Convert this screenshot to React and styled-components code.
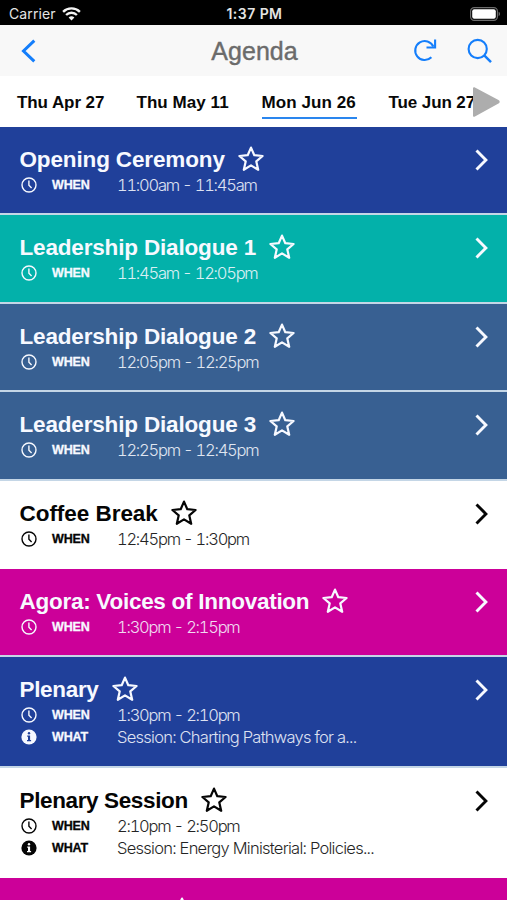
import React from 'react';
import styled, { createGlobalStyle } from 'styled-components';

const GlobalStyle = createGlobalStyle`
  * {
    box-sizing: border-box;
  }
  body {
    margin: 0;
    background: #ffffff;
    font-family: 'Liberation Sans', Arial, sans-serif;
  }
`;

const Screen = styled.div`
  width: 507px;
  height: 900px;
  overflow: hidden;
  display: flex;
  flex-direction: column;
`;

const StatusBar = styled.div`
  flex: none;
  display: grid;
  grid-template-columns: 1fr auto 1fr;
  align-items: center;
  height: 25px;
  padding: 2px 6px 0 9px;
  background: #000000;
  color: #e4e4e4;
  font-family: Inter, sans-serif;
  font-size: 14px;
`;

const Carrier = styled.div`
  display: flex;
  align-items: center;
  gap: 6px;
  letter-spacing: 0.1px;
`;

const Time = styled.div`
  padding-right: 1px;
  font-weight: 600;
  font-size: 14px;
  letter-spacing: 0.45px;
`;

const Battery = styled.svg`
  display: block;
  justify-self: end;
`;

const NavBar = styled.header`
  flex: none;
  display: grid;
  grid-template-columns: 1fr auto 1fr;
  align-items: center;
  height: 51px;
  padding: 1px 14px 0 18px;
  background: #f8f8f8;
  color: #147efb;
`;

const NavTitle = styled.h1`
  margin: 0;
  padding: 1px 2px 0 0;
  color: #6b6b6b;
  font-size: 25px;
  font-weight: 400;
  letter-spacing: 0.05px;
  -webkit-text-stroke: 0.4px #6b6b6b;
`;

const NavActions = styled.div`
  display: flex;
  justify-content: flex-end;
  gap: 30px;
`;

const Tabs = styled.nav`
  flex: none;
  display: flex;
  align-items: center;
  gap: 32px;
  height: 51px;
  padding-left: 17px;
  position: relative;
  background: #ffffff;
`;

const Tab = styled.div`
  flex: none;
  height: 34px;
  padding-top: 8px;
  line-height: 20px;
  color: #080808;
  font-size: 17px;
  font-weight: 700;
  letter-spacing: ${({ $track }) => $track}px;
  width: ${({ $width }) => $width}px;
  white-space: nowrap;
  border-bottom: 2px solid ${({ $active }) => ($active ? '#2a86ee' : 'transparent')};
`;

const ScrollArrow = styled.svg`
  position: absolute;
  right: 7px;
  top: 10px;
`;

const Row = styled.article`
  flex: none;
  display: flex;
  justify-content: space-between;
  height: ${({ $tall }) => ($tall ? 110.4 : 88.4)}px;
  padding: 19px 18px 0 20px;
  border-bottom: 2px solid #c4d6e6;
  background: ${({ $bg }) => $bg};
  color: ${({ $dark }) => ($dark ? '#050505' : '#f7f9ff')};

  ${({ $plainEdge }) => $plainEdge && 'border-bottom-color: transparent;'}
`;

const PeekRow = styled(Row)`
  justify-content: flex-start;
  padding-left: 169px;
`;

const Title = styled.h2`
  display: flex;
  align-items: center;
  gap: 13px;
  height: 26px;
  margin: 0 0 0 -0.5px;
  font-size: 22.5px;
  font-weight: 700;
  white-space: nowrap;
  letter-spacing: ${({ $track }) => $track}px;
`;

const TitleText = styled.span`
  padding-top: 2px;
`;

const Detail = styled.div`
  display: grid;
  grid-template-columns: 31px 65px auto;
  align-items: center;
  height: 22px;
  margin-top: ${({ $first }) => ($first ? 2 : 0)}px;
  padding-left: 1px;
`;

const Label = styled.span`
  font-size: 12.5px;
  font-weight: 700;
  letter-spacing: -0.15px;
  -webkit-text-stroke: 0.3px currentColor;
`;

const Value = styled.span`
  font-family: Inter, 'Liberation Sans', sans-serif;
  font-size: 16.5px;
  font-weight: 300;
  font-variant-numeric: tabular-nums;
  white-space: nowrap;
  letter-spacing: ${({ $track }) => $track}px;
  opacity: 0.88;
`;

const Glyph = styled.svg`
  flex: none;
  display: block;
`;

const WifiIcon = () => (
  <Glyph width="19" height="14" viewBox="0 0 19 14" fill="none" stroke="#f4f4f4" strokeWidth="2.4">
    <path d="M1.1 4.8a12 12 0 0 1 16.8 0" />
    <path d="M4.1 8a7.7 7.7 0 0 1 10.8 0" />
    <path d="M9.5 13.5 6.6 10.6a4.2 4.2 0 0 1 5.8 0Z" fill="#f4f4f4" stroke="none" />
  </Glyph>
);

const BackIcon = () => (
  <Glyph width="20" height="24" viewBox="0 0 20 24" fill="none" stroke="currentColor" strokeWidth="3">
    <path d="M16.3 1.7 5.5 12l10.8 10.3" />
  </Glyph>
);

const ReloadIcon = () => (
  <Glyph width="24" height="24" viewBox="0 0 24 24" fill="none" stroke="currentColor" strokeWidth="2.1">
    <path d="M18.4 19.3A9.5 9.5 0 1 1 20.4 8.6" />
    <path d="M22.1 1.4V9.5h-8.6" />
  </Glyph>
);

const SearchIcon = () => (
  <Glyph width="26" height="26" viewBox="0 0 26 26" fill="none" stroke="currentColor" strokeWidth="2.1">
    <circle cx="10.7" cy="11" r="9.1" />
    <path d="m17 17.2 7 7" strokeWidth="2.4" />
  </Glyph>
);

const StarIcon = () => (
  <Glyph width="26" height="26" viewBox="0 0 26 26" fill="none" stroke="currentColor" strokeWidth="2.2">
    <path
      strokeLinejoin="round"
      d="M13 1.6 16.3 9.2 24.6 10 18.3 15.4 20.2 23.8 13 19.4 5.8 23.8 7.7 15.4 1.4 10 9.7 9.2Z"
    />
  </Glyph>
);

const ClockIcon = () => (
  <Glyph width="16" height="16" viewBox="0 0 16 16" fill="none" stroke="currentColor" strokeWidth="1.4">
    <circle cx="8" cy="8" r="7" />
    <path d="M7.9 3.5V8.2l2.7 2.7" />
  </Glyph>
);

const InfoIcon = ({ hole }) => (
  <Glyph width="16" height="16" viewBox="0 0 16 16">
    <circle cx="8" cy="8" r="7.6" fill="currentColor" />
    <circle cx="8" cy="4.3" r="1.2" fill={hole} />
    <path d="M6.2 6.6h2.9v4.3h1v1.3H6v-1.3h1V7.8h-.8Z" fill={hole} />
  </Glyph>
);

const ChevronIcon = () => (
  <Glyph width="16" height="28" viewBox="0 0 16 28" fill="none" stroke="currentColor" strokeWidth="2.9">
    <path d="m3.5 4.4 9.4 9.5-9.4 9.5" />
  </Glyph>
);

const days = [
  { name: 'Thu Apr 27', width: 87.5, track: -0.08 },
  { name: 'Thu May 11', width: 93, track: 0.05 },
  { name: 'Mon Jun 26', width: 95, track: 0.08, active: true },
  { name: 'Tue Jun 27', width: 88, track: -0.1 },
];

const sessions = [
  { title: 'Opening Ceremony', when: '11:00am - 11:45am', bg: '#20409a', track: -0.14 },
  { title: 'Leadership Dialogue 1', when: '11:45am - 12:05pm', bg: '#03b1aa', track: -0.17 },
  { title: 'Leadership Dialogue 2', when: '12:05pm - 12:25pm', bg: '#386092', track: -0.17 },
  { title: 'Leadership Dialogue 3', when: '12:25pm - 12:45pm', bg: '#386092', track: -0.17 },
  { title: 'Coffee Break', when: '12:45pm - 1:30pm', bg: '#ffffff', dark: true, track: -0.04 },
  { title: 'Agora: Voices of Innovation', when: '1:30pm - 2:15pm', bg: '#cc0099', track: -0.27 },
  {
    title: 'Plenary',
    when: '1:30pm - 2:10pm',
    what: 'Session: Charting Pathways for a...',
    bg: '#20409a',
    track: -0.33,
  },
  {
    title: 'Plenary Session',
    when: '2:10pm - 2:50pm',
    what: 'Session: Energy Ministerial: Policies...',
    bg: '#ffffff',
    dark: true,
    track: -0.37,
  },
];

const Session = ({ session }) => {
  const { title, when, what, bg, dark, track } = session;
  return (
    <Row $bg={bg} $dark={dark} $tall={Boolean(what)} $plainEdge={dark}>
      <div>
        <Title $track={track}>
          <TitleText>{title}</TitleText>
          <StarIcon />
        </Title>
        <Detail $first>
          <ClockIcon />
          <Label>WHEN</Label>
          <Value $track={-1.24}>{when}</Value>
        </Detail>
        {what && (
          <Detail>
            <InfoIcon hole={bg} />
            <Label>WHAT</Label>
            <Value $track={-0.74}>{what}</Value>
          </Detail>
        )}
      </div>
      <ChevronIcon />
    </Row>
  );
};

const App = () => (
  <>
    <GlobalStyle />
    <Screen>
      <StatusBar>
        <Carrier>
          Carrier
          <WifiIcon />
        </Carrier>
        <Time>1:37 PM</Time>
        <Battery width="31" height="14" viewBox="0 0 31 14">
          <rect x="0.6" y="0.6" width="26.8" height="12.8" rx="3.6" fill="none" stroke="#6c6c6c" strokeWidth="1.2" />
          <rect x="2.2" y="2.2" width="23.6" height="9.6" rx="2" fill="#ffffff" />
          <path d="M28.6 4.8a2.4 2.4 0 0 1 0 4.4Z" fill="#6c6c6c" />
        </Battery>
      </StatusBar>
      <NavBar>
        <BackIcon />
        <NavTitle>Agenda</NavTitle>
        <NavActions>
          <ReloadIcon />
          <SearchIcon />
        </NavActions>
      </NavBar>
      <Tabs>
        {days.map((day) => (
          <Tab key={day.name} $active={day.active} $width={day.width} $track={day.track}>
            {day.name}
          </Tab>
        ))}
        <ScrollArrow width="28" height="32" viewBox="0 0 28 32">
          <path
            d="M2 2.2 26 14.8Q27.4 15.6 26 16.6L2 29.8Z"
            fill="#adadad"
            stroke="#adadad"
            strokeWidth="2"
            strokeLinejoin="round"
          />
        </ScrollArrow>
      </Tabs>
      {sessions.map((session) => (
        <Session key={session.title} session={session} />
      ))}
      <PeekRow $bg="#cc0099">
        <StarIcon />
      </PeekRow>
    </Screen>
  </>
);

export default App;
